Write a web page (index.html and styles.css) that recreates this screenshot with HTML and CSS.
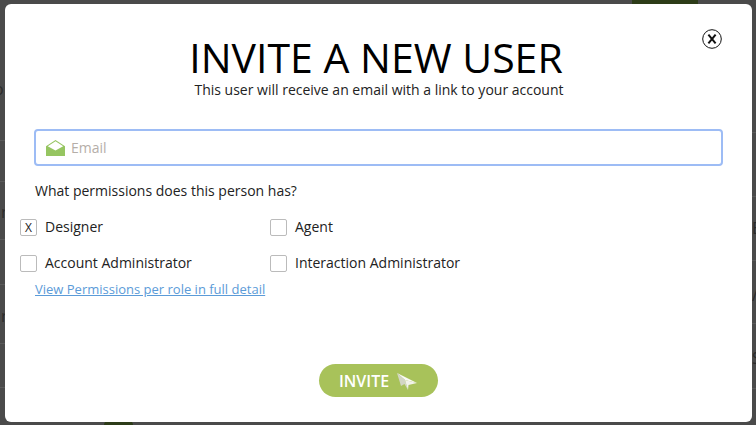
FILE: index.html
```html
<!DOCTYPE html>
<html lang="en">
<head>
<meta charset="utf-8">
<title>Invite a new user</title>
<link rel="stylesheet" href="styles.css">
</head>
<body>
<div class="backdrop">
  <div class="blob blob-top"></div>
  <div class="blob blob-bottom"></div>
  <i class="rule rule-l1"></i><i class="rule rule-l2"></i><i class="rule rule-l3"></i><i class="rule rule-l4"></i><i class="rule rule-l5"></i><i class="rule rule-l6"></i>
  <i class="rule rule-r1"></i><i class="rule rule-r2"></i><i class="rule rule-r3"></i><i class="rule rule-r4"></i><i class="rule rule-r5"></i>
  <span class="frag frag-l1">o</span><span class="frag frag-l2">r</span><span class="frag frag-l3">r</span>
  <span class="frag frag-r1">B</span><span class="frag frag-r2">/</span><span class="frag frag-r3">S</span>
</div>
<main class="modal">
  <button class="close" type="button" aria-label="Close">
    <svg width="20" height="20" viewBox="0 0 20 20"><circle cx="10" cy="10" r="9.3" fill="none" stroke="#111" stroke-width="1"/><path d="M6.4 5.6 13.6 14.4M13.6 5.6 6.4 14.4" stroke="#111" stroke-width="2" fill="none"/></svg>
  </button>
  <h1 class="title">INVITE A NEW USER</h1>
  <p class="subtitle">This user will receive an email with a link to your account</p>
  <div class="field">
    <svg class="mail" width="19" height="16" viewBox="0 0 19 16"><path d="M0 6.2 9.5 0 19 6.2V16H0Z" fill="#96c561"/><path d="M1.8 6.2 9.5 1.2 17.2 6.2 9.5 10.6Z" fill="#fff"/></svg>
    <span class="placeholder">Email</span>
  </div>
  <p class="question">What permissions does this person has?</p>
  <div class="options">
    <label class="option"><span class="box">X</span>Designer</label>
    <label class="option"><span class="box"></span>Agent</label>
    <label class="option"><span class="box"></span>Account Administrator</label>
    <label class="option"><span class="box"></span>Interaction Administrator</label>
  </div>
  <a class="details" href="#">View Permissions per role in full detail</a>
  <div class="actions">
    <button class="invite" type="button"><span class="invite-label">INVITE</span>
      <svg width="20" height="18" viewBox="0 0 20 18"><path d="M0 1 20 11 8 8Z" fill="#fafaf6"/><path d="M0 1 8 8 11 18 7.5 12 4 14Z" fill="#d2d6c4"/><path d="M8 8 20 11 11.5 13 11 18Z" fill="#f1f2ea"/></svg>
    </button>
  </div>
</main>
</body>
</html>
```

FILE: styles.css
```css
* { box-sizing: border-box; }
html, body { margin: 0; height: 100%; }
body {
  width: 756px;
  height: 425px;
  overflow: hidden;
  position: relative;
  background: #4a4a4a;
  font-family: "Open Sans", sans-serif;
  color: #111;
  padding: 4px 4px 3px 5px;
}
.backdrop { position: absolute; inset: 0; overflow: hidden; }
.blob { position: absolute; background: #2d3c18; }
.blob-top { left: 632px; top: 0; width: 66px; height: 4px; }
.blob-bottom { left: 104px; top: 420px; width: 29px; height: 5px; border-radius: 10px 10px 0 0; }
.rule { position: absolute; height: 1px; background: #5a5a5a; }
.rule-l1, .rule-l2, .rule-l3, .rule-l4, .rule-l5, .rule-l6 { left: 0; width: 5px; }
.rule-r1, .rule-r2, .rule-r3, .rule-r4, .rule-r5 { left: 752px; width: 4px; }
.rule-l1 { top: 140px; } .rule-l2 { top: 181px; } .rule-l3 { top: 239px; }
.rule-l4 { top: 284px; } .rule-l5 { top: 343px; } .rule-l6 { top: 387px; }
.rule-r1 { top: 132px; } .rule-r2 { top: 196px; } .rule-r3 { top: 260px; }
.rule-r4 { top: 323px; } .rule-r5 { top: 388px; }
.frag { position: absolute; font-size: 16px; line-height: 20px; color: #2a2a2a; }
.frag-l1 { left: -6px; top: 79px; }
.frag-l2 { left: 1px; top: 202px; }
.frag-l3 { left: 1px; top: 306px; }
.frag-r1 { left: 752px; top: 218px; }
.frag-r2 { left: 752px; top: 285px; }
.frag-r3 { left: 752px; top: 348px; }
.modal {
  position: relative;
  width: 747px;
  height: 418px;
  background: #fff;
  border-radius: 6px;
  padding: 30px 29px 25px 30px;
  display: flex;
  flex-direction: column;
}
.close {
  position: absolute;
  top: 25px;
  right: 30px;
  width: 20px;
  height: 20px;
  padding: 0;
  border: 0;
  background: none;
  display: flex;
}
.title {
  margin: 0 6px 0 0;
  text-align: center;
  font-size: 41px;
  line-height: 46px;
  font-weight: 400;
  color: #000;
}
.subtitle {
  margin: 0 0 30px;
  text-align: center;
  font-size: 14px;
  line-height: 19px;
  color: #222;
}
.field {
  height: 37px;
  margin-left: -1px;
  border: 2px solid #9dbcf5;
  border-radius: 4px;
  display: flex;
  align-items: center;
  gap: 6px;
  padding-left: 10px;
}
.placeholder { font-size: 14px; color: #b5aea8; }
.question { margin: 15px 0 0; font-size: 14px; line-height: 19px; color: #222; }
.options {
  margin: 18px 0 0 -15px;
  display: grid;
  grid-template-columns: 250px 1fr;
  row-gap: 18px;
}
.option { display: flex; align-items: center; gap: 8px; font-size: 14px; line-height: 18px; color: #222; }
.box {
  width: 17px;
  height: 17px;
  border: 1px solid #bbb;
  border-radius: 2px;
  font-size: 12px;
  line-height: 15px;
  text-align: center;
  color: #222;
}
.details { margin-top: 8px; font-size: 13px; line-height: 18px; color: #5b9bd8; align-self: flex-start; }
.actions { margin: auto 2px 0 0; display: flex; justify-content: center; }
.invite {
  width: 119px;
  height: 33px;
  border: 0;
  border-radius: 17px;
  background: #a8c25a;
  color: #fff;
  font-family: "Open Sans", sans-serif;
  font-size: 16px;
  font-weight: 600;
  display: flex;
  align-items: center;
  justify-content: center;
  gap: 8px;
  padding: 0;
}
```
